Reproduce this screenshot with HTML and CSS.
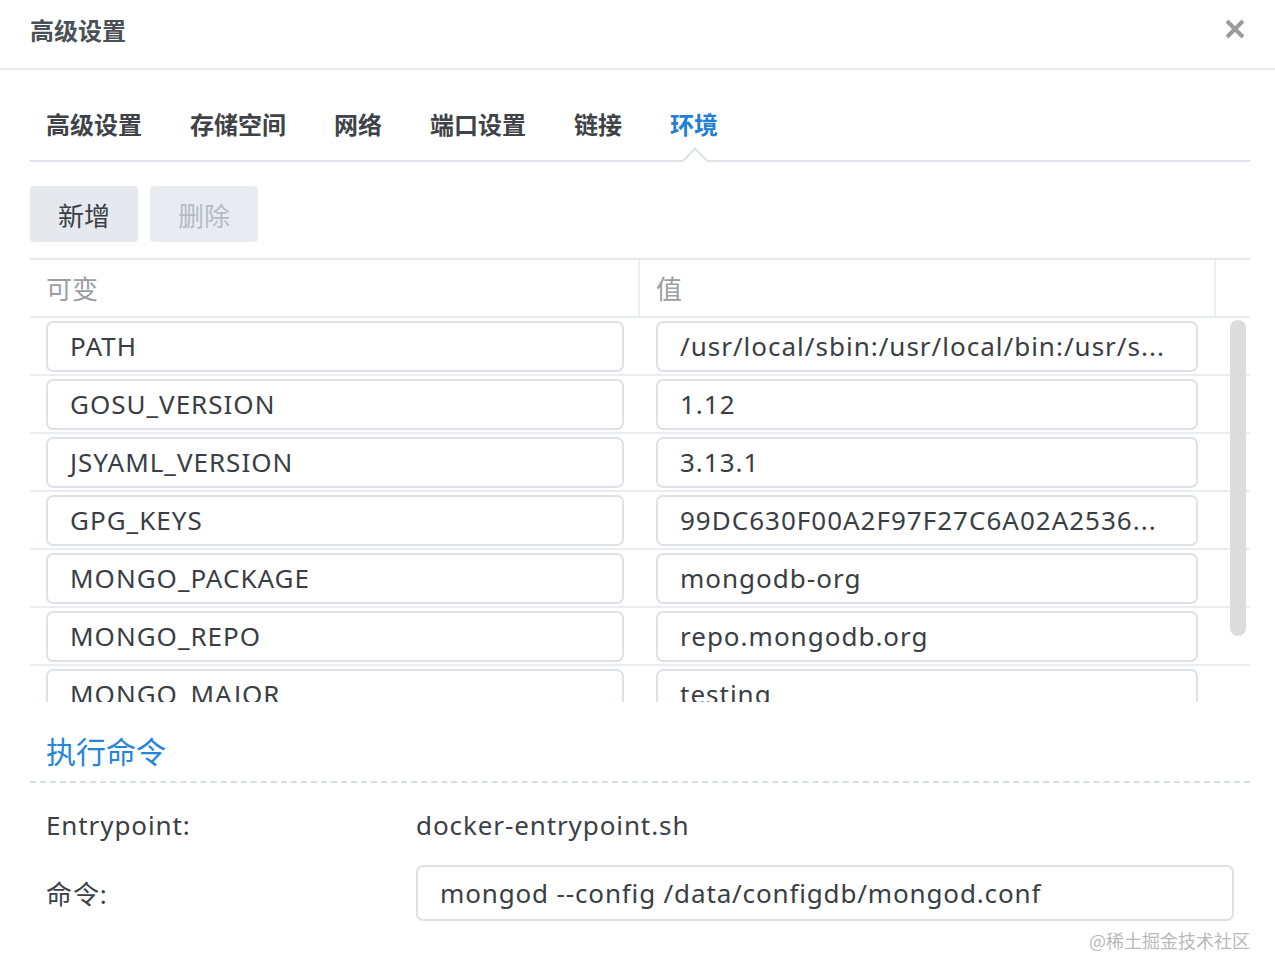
FILE: index.html
```html
<!DOCTYPE html>
<html lang="zh-CN">
<head>
<meta charset="utf-8">
<title>高级设置</title>
<link rel="stylesheet" href="styles.css">
</head>
<body>
<div class="dialog">
  <div class="header">
    <div class="title">高级设置</div>
    <svg class="close" width="22" height="22" viewBox="0 0 22 22"><path d="M3 3L19 19M19 3L3 19" stroke="#9b9b9b" stroke-width="4" stroke-linecap="butt"/></svg>
  </div>
  <div class="body">
    <div class="tabs">
      <div class="tab">高级设置</div>
      <div class="tab">存储空间</div>
      <div class="tab">网络</div>
      <div class="tab">端口设置</div>
      <div class="tab">链接</div>
      <div class="tab active">环境</div>
    </div>
    <div class="toolbar">
      <button class="btn">新增</button>
      <button class="btn disabled">删除</button>
    </div>
    <div class="table">
      <div class="thead">
        <div class="th">可变</div>
        <div class="th">值</div>
        <div class="th"></div>
      </div>
      <div class="tbody">
        <div class="row"><div class="cell"><div class="input">PATH</div></div><div class="cell"><div class="input">/usr/local/sbin:/usr/local/bin:/usr/s...</div></div></div>
        <div class="row"><div class="cell"><div class="input">GOSU_VERSION</div></div><div class="cell"><div class="input">1.12</div></div></div>
        <div class="row"><div class="cell"><div class="input">JSYAML_VERSION</div></div><div class="cell"><div class="input">3.13.1</div></div></div>
        <div class="row"><div class="cell"><div class="input">GPG_KEYS</div></div><div class="cell"><div class="input">99DC630F00A2F97F27C6A02A2536...</div></div></div>
        <div class="row"><div class="cell"><div class="input">MONGO_PACKAGE</div></div><div class="cell"><div class="input">mongodb-org</div></div></div>
        <div class="row"><div class="cell"><div class="input">MONGO_REPO</div></div><div class="cell"><div class="input">repo.mongodb.org</div></div></div>
        <div class="row"><div class="cell"><div class="input">MONGO_MAJOR</div></div><div class="cell"><div class="input">testing</div></div></div>
        <div class="scrollbar"></div>
      </div>
    </div>
    <div class="section-title">执行命令</div>
    <div class="form">
      <div class="label">Entrypoint:</div>
      <div class="value">docker-entrypoint.sh</div>
      <div class="label">命令:</div>
      <div class="field">mongod --config /data/configdb/mongod.conf</div>
    </div>
  </div>
  <div class="watermark">@稀土掘金技术社区</div>
</div>
</body>
</html>
```

FILE: styles.css
```css
* { box-sizing: border-box; }
html, body { margin: 0; padding: 0; background: #fff; }
body {
  font-family: "Noto Sans", "Noto Sans CJK SC", sans-serif;
  color: #3c4046;
}
.dialog { position: relative; width: 1275px; height: 978px; }
.header {
  height: 70px;
  padding: 0 30px 10px 30px;
  display: flex;
  align-items: center;
  justify-content: space-between;
  border-bottom: 2px solid #e6e8eb;
}
.title {
  font-family: "Noto Sans CJK SC", sans-serif;
  font-weight: 700;
  font-size: 24px;
  color: #4b5056;
}
.close { margin-right: -1px; }
.body { padding: 0 25px 0 30px; }
.tabs {
  display: flex;
  gap: 48px;
  padding: 38px 0 20px 16px;
  border-bottom: 2px solid #dfe2e8;
}
.tab {
  position: relative;
  font-family: "Noto Sans CJK SC", sans-serif;
  font-weight: 700;
  font-size: 24px;
  line-height: 32px;
  color: #3f4348;
}
.tab.active { color: #1f80d8; }
.tab.active::after {
  content: "";
  position: absolute;
  left: 50%;
  bottom: -29px;
  width: 16px;
  height: 16px;
  margin-left: -8px;
  background: #fff;
  border-top: 2px solid #dfe2e8;
  border-left: 2px solid #dfe2e8;
  transform: rotate(45deg);
}
.toolbar {
  display: flex;
  gap: 12px;
  margin-top: 24px;
}
.btn {
  width: 108px;
  height: 56px;
  border: none;
  border-radius: 4px;
  background: #e5e9ee;
  font-family: "Noto Sans CJK SC", sans-serif;
  font-size: 26px;
  color: #3c4046;
  padding: 0;
}
.btn.disabled { color: #b4bbc3; background: #e8ecf0; }
.table {
  margin-top: 16px;
  border-top: 2px solid #e4e7eb;
}
.thead {
  display: grid;
  grid-template-columns: 610px 576px 34px;
  height: 58px;
  border-bottom: 2px solid #e8eaee;
}
.th {
  font-family: "Noto Sans CJK SC", sans-serif;
  font-size: 26px;
  color: #9a9ea3;
  padding-left: 16px;
  line-height: 56px;
  border-right: 2px solid #eceef1;
}
.th:last-child { border-right: none; }
.tbody {
  position: relative;
  height: 384px;
  overflow: hidden;
}
.row {
  display: grid;
  grid-template-columns: 610px 576px;
  height: 58px;
  padding-top: 3px;
  border-bottom: 2px solid #eaecef;
}
.cell { padding-left: 16px; }
.cell:first-child .input { width: 578px; }
.cell:last-child .input { width: 542px; }
.input {
  height: 51px;
  border: 2px solid #dde2e9;
  border-radius: 7px;
  padding-left: 22px;
  font-size: 26px;
  letter-spacing: 1px;
  line-height: 47px;
  color: #3a3e44;
  white-space: nowrap;
  overflow: hidden;
}
.scrollbar {
  position: absolute;
  top: 2px;
  right: 4px;
  width: 16px;
  height: 316px;
  border-radius: 8px;
  background: #dcdcdc;
}
.section-title {
  margin-top: 28px;
  padding-left: 16px;
  font-family: "Noto Sans CJK SC", sans-serif;
  font-size: 30px;
  line-height: 40px;
  color: #2585db;
  padding-bottom: 11px;
  border-bottom: 2px dashed #d8dbdf;
}
.form {
  display: grid;
  grid-template-columns: 370px 818px;
  grid-auto-rows: 56px;
  row-gap: 12px;
  align-items: center;
  margin-top: 14px;
  padding-left: 16px;
}
.label, .value {
  font-size: 26px;
  letter-spacing: 0.9px;
  color: #3c4046;
}
.field {
  height: 56px;
  border: 2px solid #dde1e6;
  border-radius: 7px;
  padding-left: 22px;
  line-height: 52px;
  font-size: 26px;
  letter-spacing: 0.85px;
  color: #3a3e44;
}
.watermark {
  position: absolute;
  right: 25px;
  top: 927px;
  font-family: "Noto Sans CJK SC", sans-serif;
  font-size: 18px;
  color: #b7b9bc;
}
```
